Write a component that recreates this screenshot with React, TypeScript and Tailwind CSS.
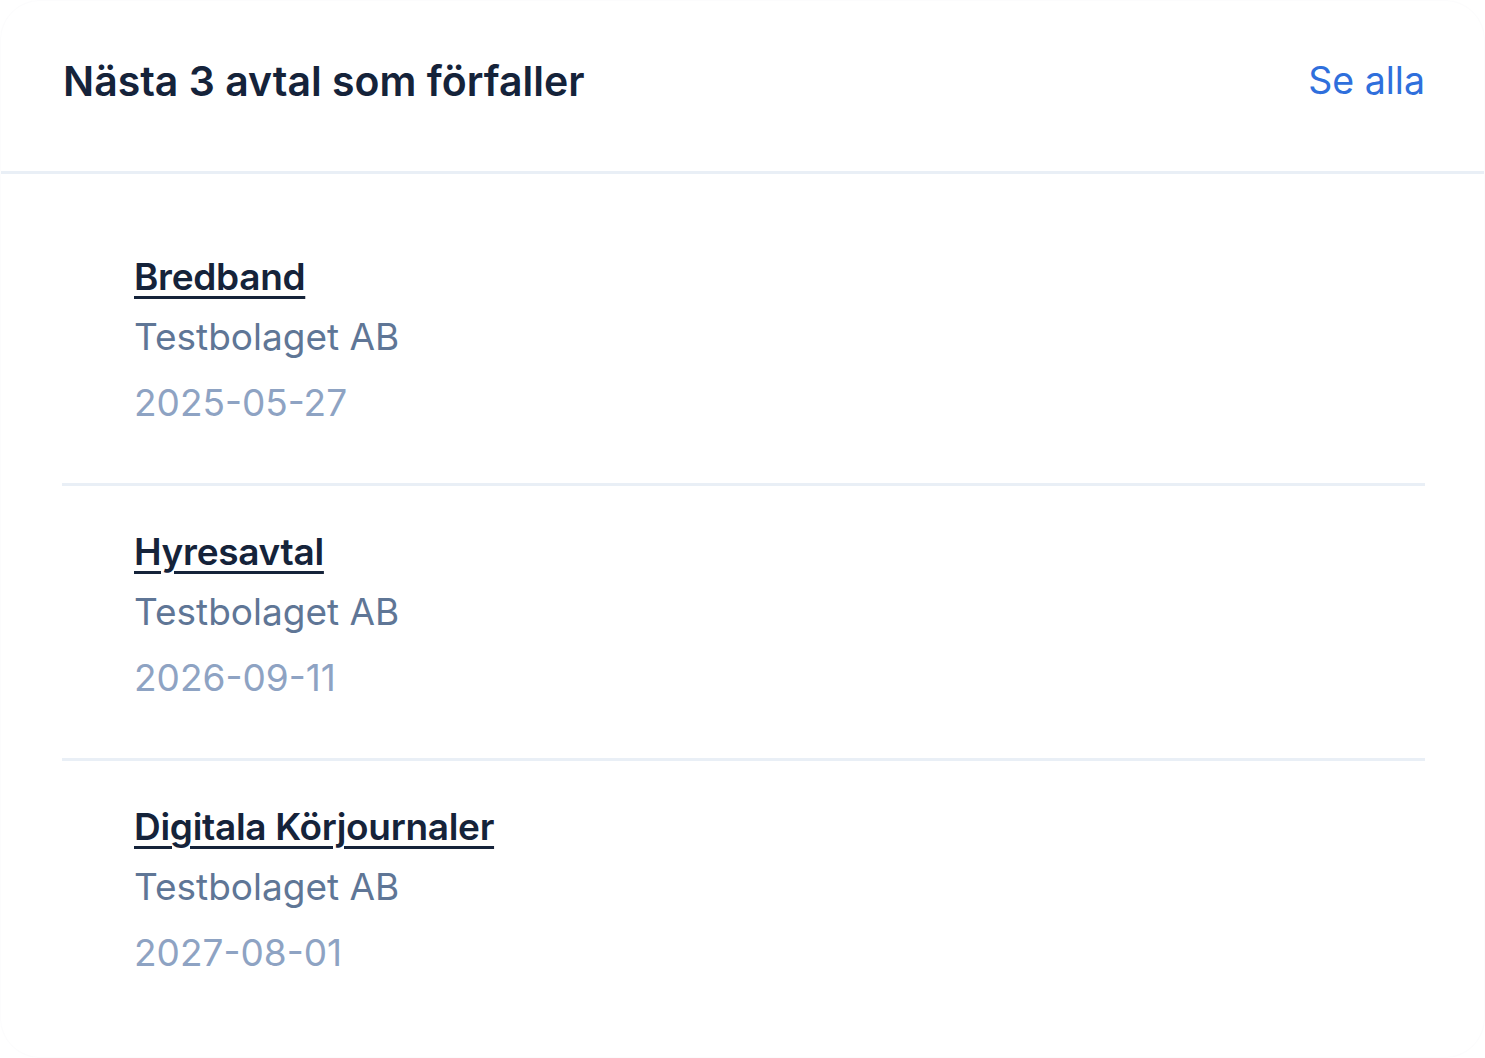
import React from "react";

const items = [
  { title: "Bredband", company: "Testbolaget AB", date: "2025-05-27" },
  { title: "Hyresavtal", company: "Testbolaget AB", date: "2026-09-11" },
  { title: "Digitala Körjournaler", company: "Testbolaget AB", date: "2027-08-01" },
];

export default function App() {
  return (
    <div
      className="w-[1485px] h-[1058px] bg-white overflow-hidden rounded-[40px] border border-[#fcfcfd] box-border"
      style={{ fontFamily: "Inter, 'Noto Sans', sans-serif" }}
    >
      <div className="h-[173px] flex items-center justify-between pl-[62px] pr-[59px] border-b-[3px] border-[#e9eff6] pb-[10px]">
        <h2 className="text-[41px] leading-[48px] font-semibold text-[#15233a]">
          Nästa 3 avtal som förfaller
        </h2>
        <a href="#" className="text-[37.5px] leading-[48px] text-[#2f6fdc]">
          Se alla
        </a>
      </div>
      <div className="pl-[61px] pr-[59px] pt-[37px]">
        {items.map((it, i) => (
          <div
            key={i}
            className={
              "pl-[72px] pt-[36px] pb-[50px] " +
              (i < items.length - 1 ? "border-b-[3px] border-[#e9eff6]" : "")
            }
          >
            <div className="text-[37px] leading-[60px] font-semibold text-[#15233a] tracking-[-0.3px]">
              <a href="#" className="underline decoration-[3px] underline-offset-[6px]">
                {it.title}
              </a>
            </div>
            <div className="text-[37px] leading-[60px] text-[#5f7696]">{it.company}</div>
            <div className="text-[37px] leading-[60px] mt-[6px] text-[#8ea3c3]">{it.date}</div>
          </div>
        ))}
      </div>
    </div>
  );
}
